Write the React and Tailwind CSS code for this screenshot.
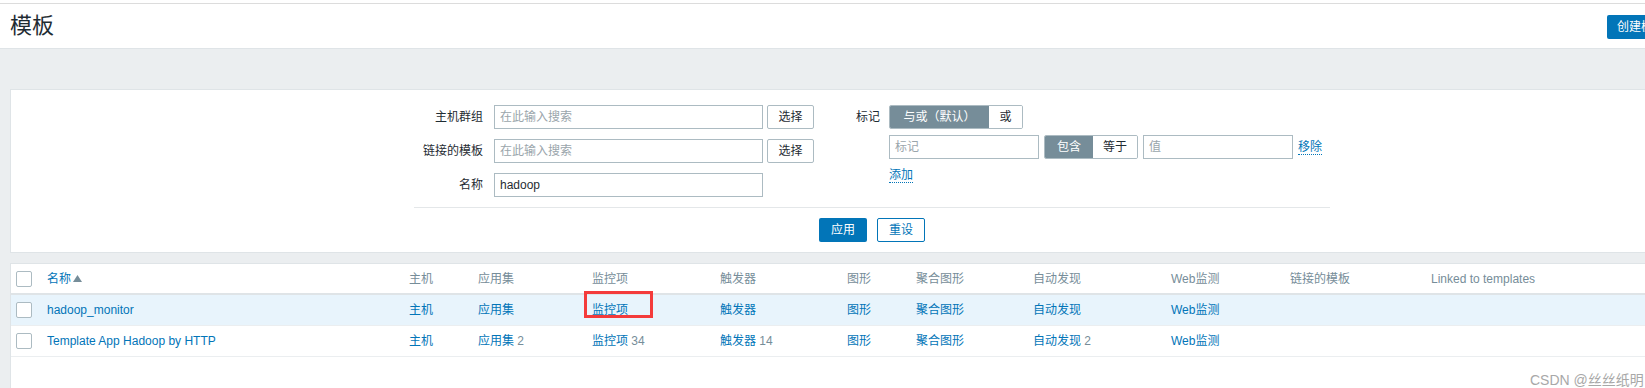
const F = "font-['Liberation_Sans','Noto_Sans_CJK_SC',sans-serif]";

function Input({ placeholder, value, w = "w-[269px]" }) {
  return (
    <div className={`${w} h-6 border border-[#acbbc2] bg-white flex items-center px-[5px]`}>
      {value ? (
        <span className="text-[#1f2c33]">{value}</span>
      ) : (
        <span className="text-[#9aa5ab]">{placeholder}</span>
      )}
    </div>
  );
}

function SelectBtn() {
  return (
    <div className="ml-[4px] w-[47px] h-6 border border-[#acbbc2] rounded-[2px] bg-white flex items-center justify-center text-[#1f2c33]">
      选择
    </div>
  );
}

function Checkbox() {
  return <div className="w-4 h-4 border border-[#acbbc2] rounded-[2px] bg-white" />;
}

const cols = [
  "w-[362px]",
  "w-[69px]",
  "w-[114px]",
  "w-[128px]",
  "w-[127px]",
  "w-[69px]",
  "w-[117px]",
  "w-[138px]",
  "w-[119px]",
  "w-[141px]",
  "w-[200px]",
];

function Count({ n }) {
  return <span className="text-[#768d99]"> {n}</span>;
}

function Link({ children }) {
  return <span className="text-[#0275b8]">{children}</span>;
}

export default function App() {
  return (
    <div className={`w-[1645px] h-[388px] overflow-hidden bg-[#ebeef0] relative ${F} text-[12px] text-[#1f2c33]`}>
      <div className="w-[1685px]">
        {/* header */}
        <div className="bg-white pt-[3px]">
          <div className="border-t border-b border-t-[#dcdcdc] border-b-[#dfe4e7] h-[46px] flex items-center justify-between px-[10px]">
            <h1 className="text-[22px] leading-none text-[#1f2c33]">模板</h1>
            <div className="h-6 px-[10px] bg-[#0275b8] text-white rounded-[2px] flex items-center mt-[2px]">创建模板</div>
          </div>
        </div>

        {/* filter */}
        <div className="mx-[10px] mt-[40px] bg-white border border-[#dfe4e7] pt-[15px] pb-[10px]">
          <div className="ml-[403px] w-[916px]">
            <div className="flex">
              <div className="flex flex-col gap-[10px]">
                <div className="flex items-center h-6">
                  <div className="w-[69px] text-right">主机群组</div>
                  <div className="ml-[11px]"><Input placeholder="在此输入搜索" /></div>
                  <SelectBtn />
                </div>
                <div className="flex items-center h-6">
                  <div className="w-[69px] text-right">链接的模板</div>
                  <div className="ml-[11px]"><Input placeholder="在此输入搜索" /></div>
                  <SelectBtn />
                </div>
                <div className="flex items-center h-6">
                  <div className="w-[69px] text-right">名称</div>
                  <div className="ml-[11px]"><Input value="hadoop" /></div>
                </div>
              </div>
              <div className="ml-[31px] flex">
                <div className="w-[35px] text-right h-6 leading-6">标记</div>
                <div className="ml-[9px] flex flex-col">
                  <div className="flex h-6 w-[134px] border border-[#acbbc2] rounded-[2px] overflow-hidden">
                    <div className="w-[99px] bg-[#768d99] text-white flex items-center justify-center">与或（默认）</div>
                    <div className="flex-1 bg-white flex items-center justify-center">或</div>
                  </div>
                  <div className="flex items-center mt-[6px]">
                    <Input placeholder="标记" w="w-[150px]" />
                    <div className="ml-[5px] flex h-6 w-[94px] border border-[#acbbc2] rounded-[2px] overflow-hidden">
                      <div className="w-[48px] bg-[#768d99] text-white flex items-center justify-center">包含</div>
                      <div className="flex-1 bg-white flex items-center justify-center">等于</div>
                    </div>
                    <div className="ml-[5px]"><Input placeholder="值" w="w-[150px]" /></div>
                    <span className="ml-[5px] text-[#0275b8] leading-[14px] border-b border-dotted border-[#0275b8]">移除</span>
                  </div>
                  <div className="mt-[7px]">
                    <span className="inline-block text-[#0275b8] leading-[14px] border-b border-dotted border-[#0275b8]">添加</span>
                  </div>
                </div>
              </div>
            </div>
            <div className="mt-[10px] border-t border-[#e4e7e9]" />
            <div className="mt-[10px] flex justify-center gap-[10px]">
              <div className="w-[48px] h-6 bg-[#0275b8] text-white rounded-[2px] flex items-center justify-center">应用</div>
              <div className="w-[48px] h-6 bg-white text-[#0275b8] border border-[#0275b8] rounded-[2px] flex items-center justify-center">重设</div>
            </div>
          </div>
        </div>

        {/* table */}
        <div className="mx-[10px] mt-[10px] bg-white border border-[#dfe4e7] pb-[40px]">
          <div className="flex items-center h-[31px] border-b-2 border-[#dfe4e7] text-[#768d99]">
            <div className="w-[36px] pl-[5px]"><Checkbox /></div>
            <div className={`${cols[0]} flex items-center`}>
              <span className="text-[#0275b8]">名称</span>
              <svg width="9" height="7" viewBox="0 0 9 7" className="ml-[2px]">
                <path d="M4.5 0 L9 7 L0 7 Z" fill="#768d99" />
              </svg>
            </div>
            <div className={cols[1]}>主机</div>
            <div className={cols[2]}>应用集</div>
            <div className={cols[3]}>监控项</div>
            <div className={cols[4]}>触发器</div>
            <div className={cols[5]}>图形</div>
            <div className={cols[6]}>聚合图形</div>
            <div className={cols[7]}>自动发现</div>
            <div className={cols[8]}>Web监测</div>
            <div className={cols[9]}>链接的模板</div>
            <div className={cols[10]}>Linked to templates</div>
          </div>

          <div className="flex items-center h-[31px] border-b border-[#ebeef0] bg-[#e8f4fc]">
            <div className="w-[36px] pl-[5px]"><Checkbox /></div>
            <div className={cols[0]}><Link>hadoop_monitor</Link></div>
            <div className={cols[1]}><Link>主机</Link></div>
            <div className={cols[2]}><Link>应用集</Link></div>
            <div className={`${cols[3]} relative`}>
              <Link>监控项</Link>
              <div className="absolute left-[-8px] top-[-10px] w-[69px] h-[27px] border-[3px] border-[#f43b3b]" />
            </div>
            <div className={cols[4]}><Link>触发器</Link></div>
            <div className={cols[5]}><Link>图形</Link></div>
            <div className={cols[6]}><Link>聚合图形</Link></div>
            <div className={cols[7]}><Link>自动发现</Link></div>
            <div className={cols[8]}><Link>Web监测</Link></div>
            <div className={cols[9]} />
            <div className={cols[10]} />
          </div>

          <div className="flex items-center h-[31px] border-b border-[#ebeef0]">
            <div className="w-[36px] pl-[5px]"><Checkbox /></div>
            <div className={cols[0]}><Link>Template App Hadoop by HTTP</Link></div>
            <div className={cols[1]}><Link>主机</Link></div>
            <div className={cols[2]}><Link>应用集</Link><Count n="2" /></div>
            <div className={cols[3]}><Link>监控项</Link><Count n="34" /></div>
            <div className={cols[4]}><Link>触发器</Link><Count n="14" /></div>
            <div className={cols[5]}><Link>图形</Link></div>
            <div className={cols[6]}><Link>聚合图形</Link></div>
            <div className={cols[7]}><Link>自动发现</Link><Count n="2" /></div>
            <div className={cols[8]}><Link>Web监测</Link></div>
            <div className={cols[9]} />
            <div className={cols[10]} />
          </div>
        </div>
      </div>

      {/* watermark */}
      <div className="absolute left-[1530px] top-[371px] text-[14px] leading-[18px] whitespace-nowrap text-[#a8a8a8]">
        CSDN @丝丝纸明<span className="text-[#555]">自动</span>
      </div>
    </div>
  );
}
